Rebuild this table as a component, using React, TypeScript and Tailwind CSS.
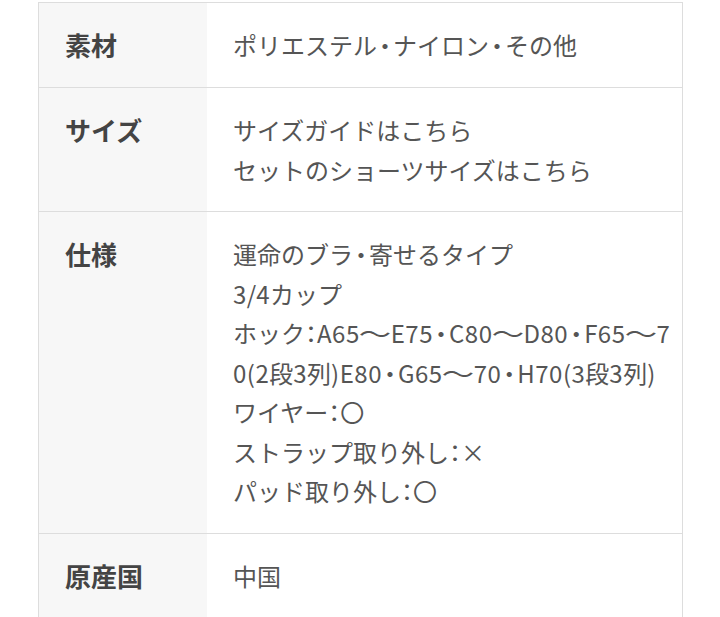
import React from "react";

const rows: { label: string; lines: string[] }[] = [
  { label: "素材", lines: ["ポリエステル・ナイロン・その他"] },
  { label: "サイズ", lines: ["サイズガイドはこちら", "セットのショーツサイズはこちら"] },
  {
    label: "仕様",
    lines: [
      "運命のブラ・寄せるタイプ",
      "3/4カップ",
      "ホック：A65～E75・C80～D80・F65～7",
      "0(2段3列)E80・G65～70・H70(3段3列)",
      "ワイヤー：〇",
      "ストラップ取り外し：×",
      "パッド取り外し：〇",
    ],
  },
  { label: "原産国", lines: ["中国"] },
];

function Line({ text }: { text: string }) {
  const parts = text.split(/([・：～]|[A-Za-z0-9()]+)/).filter((p) => p !== "");
  return (
    <div>
      {parts.map((p, i) => {
        if (p === "・")
          return (
            <span key={i} className="inline-block w-[16px] text-center [font-feature-settings:'palt']">
              ・
            </span>
          );
        if (p === "：")
          return (
            <span key={i} className="[font-feature-settings:'palt']">
              ：
            </span>
          );
        if (p === "～")
          return (
            <span key={i} className="inline-block w-[31px] text-center">
              <span className="inline-block scale-x-[1.35]">～</span>
            </span>
          );
        if (/^[A-Za-z0-9()]+$/.test(p))
          return (
            <span key={i} className="tracking-[0.5px]">
              {p}
            </span>
          );
        return <span key={i}>{p}</span>;
      })}
    </div>
  );
}

export default function App() {
  return (
    <div
      className="w-[720px] h-[617px] overflow-hidden bg-white pl-[38px] pt-[2px]"
      style={{ fontFamily: '"Noto Sans CJK JP", "Noto Sans", sans-serif' }}
    >
      <div className="w-[645px] border border-[#dddddd] border-b-0">
        {rows.map((r, i) => (
          <div key={i} className={`flex ${i > 0 ? "border-t border-[#dddddd]" : ""}`}>
            <div className="w-[168px] shrink-0 bg-[#f7f7f7] pl-[26px] py-[22px] text-[26px] leading-[40px] font-bold text-[#444444]">
              {r.label}
            </div>
            <div className="flex-1 pl-[26px] py-[22px] text-[24px] leading-[39.5px] text-[#555555] whitespace-nowrap">
              {r.lines.map((l, j) => (
                <Line key={j} text={l} />
              ))}
            </div>
          </div>
        ))}
      </div>
    </div>
  );
}
